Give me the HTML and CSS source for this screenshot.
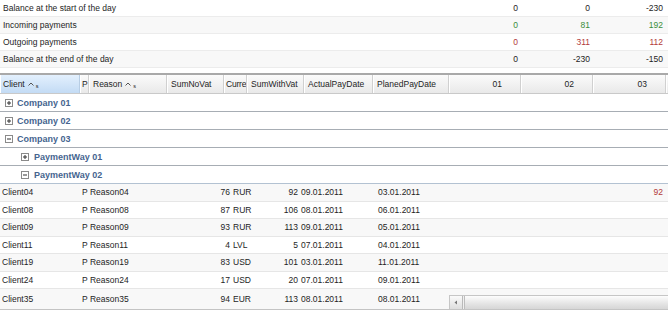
FILE: index.html
```html
<!DOCTYPE html>
<html lang="en">
<head>
    <meta charset="UTF-8">
    <title>Payments grid</title>
    <link rel="stylesheet" href="styles.css">
</head>
<body>
    <div class="summary">
        <div class="sum-row">
            <span class="sum-label">Balance at the start of the day</span>
            <span class="val">0</span><span class="val">0</span><span class="val">-230</span>
        </div>
        <div class="sum-row">
            <span class="sum-label">Incoming payments</span>
            <span class="val pos">0</span><span class="val pos">81</span><span class="val pos">192</span>
        </div>
        <div class="sum-row">
            <span class="sum-label">Outgoing payments</span>
            <span class="val neg">0</span><span class="val neg">311</span><span class="val neg">112</span>
        </div>
        <div class="sum-row">
            <span class="sum-label">Balance at the end of the day</span>
            <span class="val">0</span><span class="val">-230</span><span class="val">-150</span>
        </div>
    </div>

    <div class="grid">
        <div class="head">
            <div class="hcell sorted">Client <span class="sort"><svg width="6" height="4" viewBox="0 0 6 4"><path d="M0.5 3.5 L3 1 L5.5 3.5" fill="none" stroke="#555" stroke-width="1"/></svg><small>s</small></span></div>
            <div class="hcell tight">P</div>
            <div class="hcell">Reason <span class="sort"><svg width="6" height="4" viewBox="0 0 6 4"><path d="M0.5 3.5 L3 1 L5.5 3.5" fill="none" stroke="#555" stroke-width="1"/></svg><small>s</small></span></div>
            <div class="hcell">SumNoVat</div>
            <div class="hcell tight">Curre</div>
            <div class="hcell">SumWithVat</div>
            <div class="hcell">ActualPayDate</div>
            <div class="hcell">PlanedPayDate</div>
            <div class="hcell num">01</div>
            <div class="hcell num">02</div>
            <div class="hcell num">03</div>
            <div class="hcell"></div>
        </div>

        <div class="group">
            <svg class="toggle" width="8" height="8" viewBox="0 0 8 8"><rect x="0.5" y="0.5" width="7" height="7" fill="#fff" stroke="#8a8a8a"/><path d="M2 4h4M4 2v4" stroke="#333"/></svg>
            Company 01
        </div>
        <div class="group">
            <svg class="toggle" width="8" height="8" viewBox="0 0 8 8"><rect x="0.5" y="0.5" width="7" height="7" fill="#fff" stroke="#8a8a8a"/><path d="M2 4h4M4 2v4" stroke="#333"/></svg>
            Company 02
        </div>
        <div class="group">
            <svg class="toggle" width="8" height="8" viewBox="0 0 8 8"><rect x="0.5" y="0.5" width="7" height="7" fill="#fff" stroke="#8a8a8a"/><path d="M2 4h4" stroke="#333"/></svg>
            Company 03
        </div>
        <div class="group sub">
            <svg class="toggle" width="8" height="8" viewBox="0 0 8 8"><rect x="0.5" y="0.5" width="7" height="7" fill="#fff" stroke="#8a8a8a"/><path d="M2 4h4M4 2v4" stroke="#333"/></svg>
            PaymentWay 01
        </div>
        <div class="group sub open">
            <svg class="toggle" width="8" height="8" viewBox="0 0 8 8"><rect x="0.5" y="0.5" width="7" height="7" fill="#fff" stroke="#8a8a8a"/><path d="M2 4h4" stroke="#333"/></svg>
            PaymentWay 02
        </div>

        <div class="rows">
            <div class="row alt">
                <span>Client04</span><span>P Reason04</span><span class="r">76</span><span>RUR</span><span class="r">92</span><span>09.01.2011</span><span class="pl">03.01.2011</span><span></span><span></span><span class="r neg">92</span>
            </div>
            <div class="row">
                <span>Client08</span><span>P Reason08</span><span class="r">87</span><span>RUR</span><span class="r">106</span><span>08.01.2011</span><span class="pl">06.01.2011</span><span></span><span></span><span></span>
            </div>
            <div class="row alt">
                <span>Client09</span><span>P Reason09</span><span class="r">93</span><span>RUR</span><span class="r">113</span><span>09.01.2011</span><span class="pl">05.01.2011</span><span></span><span></span><span></span>
            </div>
            <div class="row">
                <span>Client11</span><span>P Reason11</span><span class="r">4</span><span>LVL</span><span class="r">5</span><span>07.01.2011</span><span class="pl">04.01.2011</span><span></span><span></span><span></span>
            </div>
            <div class="row alt">
                <span>Client19</span><span>P Reason19</span><span class="r">83</span><span>USD</span><span class="r">101</span><span>03.01.2011</span><span class="pl">11.01.2011</span><span></span><span></span><span></span>
            </div>
            <div class="row">
                <span>Client24</span><span>P Reason24</span><span class="r">17</span><span>USD</span><span class="r">20</span><span>07.01.2011</span><span class="pl">09.01.2011</span><span></span><span></span><span></span>
            </div>
            <div class="row alt last">
                <span>Client35</span><span>P Reason35</span><span class="r">94</span><span>EUR</span><span class="r">113</span><span>08.01.2011</span><span class="pl">08.01.2011</span><span></span><span></span><span></span>
            </div>

            <div class="hscroll">
                <span class="hs-btn"><svg width="4" height="5" viewBox="0 0 4 5"><path d="M3 0.5 L0.5 2.5 L3 4.5Z" fill="#777"/></svg></span>
                <span class="hs-thumb"></span>
            </div>
        </div>
    </div>
</body>
</html>
```

FILE: styles.css
```css
:root {
    --text: #1e1e1e;
    --green: #3a8d3a;
    --red: #b23a3a;
    --group: #45648f;
    --line: #e6e6e6;
}

body {
    margin: 0;
    width: 668px;
    height: 312px;
    overflow: hidden;
    background: #fff;
    color: var(--text);
    font-family: "Liberation Sans", Arial, sans-serif;
    font-size: 8.5px;
}

/* summary block above the grid */
.summary {
    margin-bottom: 5px;
}

.sum-row {
    display: grid;
    grid-template-columns: 449px 72px 72px 73px 2px;
    height: 16px;
    align-items: center;
    border-bottom: 1px solid #ececec;
}

.sum-row:nth-child(even) {
    background: #f8f8f8;
}

.sum-label {
    padding-left: 3px;
}

.val {
    text-align: right;
    padding-right: 3px;
}

.pos { color: var(--green); }
.neg { color: var(--red); }

/* grid */
.grid {
    border-top: 2px solid #a9a9a9;
}

.head {
    display: grid;
    grid-template-columns: 80px 9px 78px 57px 23px 57px 69px 76px 72px 72px 73px 1fr;
    height: 18px;
    background: linear-gradient(#fbfbfb, #e9e9e9);
    border-bottom: 1px solid #c9c9c9;
}

.hcell {
    display: flex;
    align-items: center;
    padding-left: 4px;
    border-right: 1px solid #d0d0d0;
    box-shadow: inset 1px 0 #fff;
    white-space: nowrap;
    overflow: hidden;
}

.hcell.tight {
    padding-left: 2px;
    letter-spacing: -0.2px;
}

.hcell.sorted {
    background: linear-gradient(#e3f0fd, #c3dbf4);
    border-right-color: #b7cde4;
    padding-left: 3px;
}

.hcell.num {
    justify-content: flex-end;
    padding-right: 18px;
}

.sort {
    display: inline-flex;
    align-items: center;
    gap: 2px;
    margin-left: 3px;
}

.sort small {
    font-size: 5.5px;
    margin-top: 3px;
}

.group {
    display: flex;
    align-items: center;
    gap: 4px;
    height: 17px;
    padding-left: 5px;
    border-bottom: 1px solid #a7adb4;
    color: var(--group);
    font-weight: bold;
    font-size: 9px;
}

.group.sub {
    padding-left: 21px;
    gap: 5px;
}

.group.open {
    border-bottom-color: #b3c2d2;
}

.toggle {
    flex: none;
}

.rows {
    position: relative;
}

.row {
    display: grid;
    grid-template-columns: 80px 87px 64px 24px 44px 77px 73px 72px 72px 73px;
    height: 16.5px;
    align-items: center;
    border-bottom: 1px solid var(--line);
}

.row.alt {
    background: #f8f8f8;
}

.row.last {
    height: 20px;
    border-bottom: 1px solid #c4c4c4;
}

.row span {
    padding-left: 2px;
    white-space: nowrap;
}

.row .r {
    text-align: right;
    padding-left: 0;
    padding-right: 1px;
}

.row .pl {
    padding-left: 2px;
}

.row span:last-child.r {
    padding-right: 3px;
}

/* horizontal scrollbar lying over the last row */
.hscroll {
    position: absolute;
    left: 449px;
    right: 0;
    bottom: 1px;
    height: 13px;
    display: flex;
    border-top: 1px solid #c6c6c6;
    background: #f0f0f0;
}

.hs-btn {
    width: 12px;
    display: flex;
    align-items: center;
    justify-content: center;
    border-right: 1px solid #b9b9b9;
    border-left: 1px solid #c6c6c6;
    background: linear-gradient(#fafafa, #dedede);
}

.hs-thumb {
    flex: 1;
    margin-left: 1px;
    border-left: 1px solid #bdbdbd;
    background: linear-gradient(#fdfdfd, #e4e4e4 60%, #d6d6d6);
}
```
